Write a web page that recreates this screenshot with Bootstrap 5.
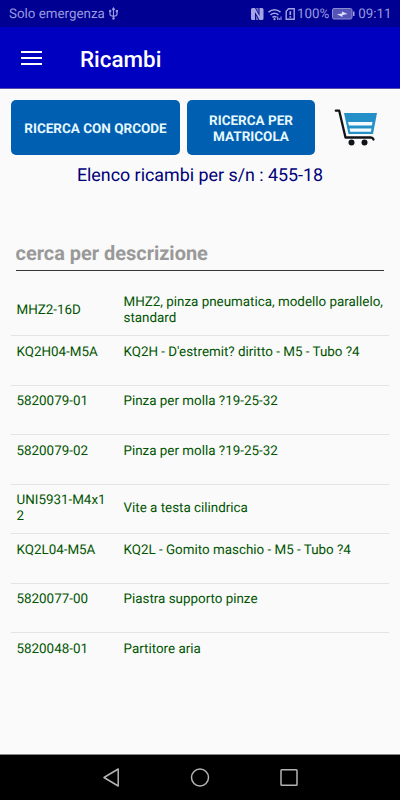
<!DOCTYPE html>
<html lang="it">
<head>
<meta charset="utf-8">
<meta name="viewport" content="width=device-width, initial-scale=1">
<title>Ricambi</title>
<link href="https://cdn.jsdelivr.net/npm/bootstrap@5.3.0/dist/css/bootstrap.min.css" rel="stylesheet">
<style>
  body { font-family: Roboto, "Liberation Sans", sans-serif; background: #fafafa; height: 800px; overflow: hidden; text-rendering: geometricPrecision; }
  svg { display: block; flex: none; }
  .status-bar { height: 27px; background: #000093; color: #9a9ade; font-size: 13.35px; line-height: 26px; padding: 2px 8.5px 0 9px; }
  .status-bar svg { margin-bottom: 2px; }
  .usb-icon { margin-left: 4px; }
  .battery-icon { margin-left: 3px; }
  .clock { padding-left: 3px; }
  .app-bar { height: 62px; background: #0000c0; border-bottom: 1px solid #5050a8; padding: 0 20px; }
  .app-title { font-size: 22.4px; font-weight: 500; color: #fff; line-height: 26px; margin: 4px 0 0 37px; }
  .actions { padding: 11px 11px 0; gap: 7px; }
  .btn-scan { --bs-btn-bg: #005fb0; --bs-btn-color: #e6f8ff; --bs-btn-hover-bg: #0054a0; --bs-btn-hover-color: #fff; --bs-btn-border-width: 0; --bs-btn-border-radius: 5px; --bs-btn-font-size: 13.5px; --bs-btn-font-weight: 700; --bs-btn-line-height: 15.5px; --bs-btn-padding-x: 12px; --bs-btn-padding-y: 0; height: 55px; padding-top: 4px; text-rendering: inherit; }
  .btn-qr { width: 169px; }
  .btn-serial { width: 128px; }
  .cart-link { margin-left: 12px; }
  .list-title { font-size: 17.85px; color: #000078; line-height: 24px; margin-top: 9px; }
  .search-input { margin: 47px 16px 0 15.5px; width: auto; height: 36px; padding: 0; font-size: 19.95px; font-weight: 700; border: 0; border-bottom: 1px solid #38383c; border-radius: 0; background: transparent; text-rendering: inherit; }
  .search-input::placeholder { color: #999; opacity: 1; }
  .parts { padding: 0 11px; margin-top: 15.5px; }
  .part { height: 49.5px; padding: 8.5px 0 0 5.5px; border-bottom: 1px solid #e4e4e4; color: #005400; font-size: 13.4px; line-height: 15.5px; }
  .part:last-child { border-bottom: 0; }
  .part-code { width: 92px; margin-right: 15px; word-break: break-all; flex: none; }
  .part-desc { margin-right: -8px; }
  .sys-nav { height: 46px; background: #000; border-top: 1px solid #888; }
</style>
</head>
<body class="d-flex flex-column">
<div class="status-bar d-flex align-items-center">
  <span>Solo emergenza</span>
  <svg class="usb-icon" width="9" height="13" viewBox="0 0 9 13" fill="none" stroke="#9a9ade" stroke-width="1.2"><path d="M4.500 1v11M1 4v3.200q0 1.500 3.500 2.200M8 4v3.200q0 1.500-3.500 2.200M3.200 2.800L4.500 1l1.300 1.800"/><circle cx="4.500" cy="11.500" r="1.200" fill="#9a9ade" stroke="none"/><circle cx="1.200" cy="4" r="1.200" fill="#9a9ade" stroke="none"/><rect x="6.800" y="3" width="2.200" height="2.200" fill="#9a9ade" stroke="none"/></svg>
  <div class="d-flex align-items-center ms-auto">
    <svg width="45" height="14" viewBox="0 0 45 14">
      <path d="M1.500 1H4l4.500 8V1H11q1.500 0 1.500 1.500v9q0 1.500-1.500 1.500H8.500L4 5v8H1.500Q0 13 0 11.500v-9Q0 1 1.500 1z" fill="#a4a4e2"/><path d="M4.900 1h2.700v5.200zM4.900 13V8.200L7.600 13z" fill="#6c6cc4"/>
      <g fill="none" stroke="#a4a4e2" stroke-width="1.500"><path d="M17.500 5.200q6-5 12 0M19.500 7.900q4-3.400 8 0M21.500 10.300q2-1.600 4 0"/></g>
      <circle cx="23.500" cy="12.200" r="1.100" fill="#a4a4e2"/><path d="M26.700 9.500V13M28.200 11v2M30 9.500V13" stroke="#a4a4e2" stroke-width="1"/>
      <path d="M37.500 1.700h5.700v10.600h-8V4.200z" fill="none" stroke="#a4a4e2" stroke-width="1.400"/><path d="M39.300 4.300v3.700M39.300 9.200v1.600" stroke="#a4a4e2" stroke-width="1.700"/>
    </svg>
    <span>&#8202;100%</span>
    <svg class="battery-icon" width="23" height="12" viewBox="0 0 23 12"><rect x=".5" y=".5" width="19.500" height="10.500" rx="1.500" fill="#5454b8" stroke="#8c8cd2"/><path d="M21 3.500h1.500v4.500H21z" fill="#a4a4e2"/><path d="M5 6.200l5-.7V3.500l5.500 2.600-5 .8v2z" fill="#dedeff"/></svg>
    <span class="clock">09:11</span>
  </div>
</div>
<nav class="app-bar d-flex align-items-center">
  <svg width="23" height="16" viewBox="0 0 23 16" stroke="#fff" stroke-width="2.200"><path d="M1 2h21M1 8h21M1 14h21"/></svg>
  <h1 class="app-title">Ricambi</h1>
</nav>
<main class="flex-grow-1">
  <div class="actions d-flex align-items-center">
    <button class="btn btn-scan btn-qr text-nowrap" type="button">RICERCA CON QRCODE</button>
    <button class="btn btn-scan btn-serial" type="button">RICERCA PER MATRICOLA</button>
    <a class="cart-link" href="#" aria-label="Carrello">
      <svg width="46" height="40" viewBox="0 0 46 40">
        <path d="M10 5h33l-4 21H14.500z" fill="#2590c8"/>
        <path d="M14 14h24.500l-.6 3.500H15zM15.500 20.500h22l-.6 3.300H16.300z" fill="#f4fbff"/>
        <path d="M1.800 2.700h3.400L11.500 29.500h25.300q2 0 2.700 2" fill="none" stroke="#101418" stroke-width="2.300" stroke-linejoin="round" stroke-linecap="round"/>
        <circle cx="17.500" cy="34.500" r="3" fill="#101418"/><circle cx="30.500" cy="34.500" r="3" fill="#101418"/>
      </svg>
    </a>
  </div>
  <div class="list-title text-center">Elenco ricambi per s/n : 455-18</div>
  <div class="d-flex flex-column"><input class="form-control search-input" type="text" placeholder="cerca per descrizione"></div>
  <div class="parts">
    <div class="part"><div class="d-flex align-items-center"><div class="part-code">MHZ2-16D</div><div class="part-desc">MHZ2, pinza pneumatica, modello parallelo, standard</div></div></div>
    <div class="part"><div class="d-flex align-items-center"><div class="part-code">KQ2H04-M5A</div><div class="part-desc">KQ2H - D'estremit? diritto - M5 - Tubo ?4</div></div></div>
    <div class="part"><div class="d-flex align-items-center"><div class="part-code">5820079-01</div><div class="part-desc">Pinza per molla ?19-25-32</div></div></div>
    <div class="part"><div class="d-flex align-items-center"><div class="part-code">5820079-02</div><div class="part-desc">Pinza per molla ?19-25-32</div></div></div>
    <div class="part"><div class="d-flex align-items-center"><div class="part-code">UNI5931-M4x12</div><div class="part-desc">Vite a testa cilindrica</div></div></div>
    <div class="part"><div class="d-flex align-items-center"><div class="part-code">KQ2L04-M5A</div><div class="part-desc">KQ2L - Gomito maschio - M5 - Tubo ?4</div></div></div>
    <div class="part"><div class="d-flex align-items-center"><div class="part-code">5820077-00</div><div class="part-desc">Piastra supporto pinze</div></div></div>
    <div class="part"><div class="d-flex align-items-center"><div class="part-code">5820048-01</div><div class="part-desc">Partitore aria</div></div></div>
  </div>
</main>
<footer class="sys-nav d-flex">
  <svg width="400" height="45" viewBox="0 0 400 45" fill="none" stroke="#b4b4b4" stroke-width="1.500" stroke-linejoin="round"><path d="M118.200 14v17L104 22.500z"/><circle cx="200" cy="22.500" r="8.500"/><rect x="281" y="14.700" width="16" height="15.600" rx=".8"/></svg>
</footer>
<script src="https://cdn.jsdelivr.net/npm/bootstrap@5.3.0/dist/js/bootstrap.bundle.min.js"></script>
</body>
</html>
